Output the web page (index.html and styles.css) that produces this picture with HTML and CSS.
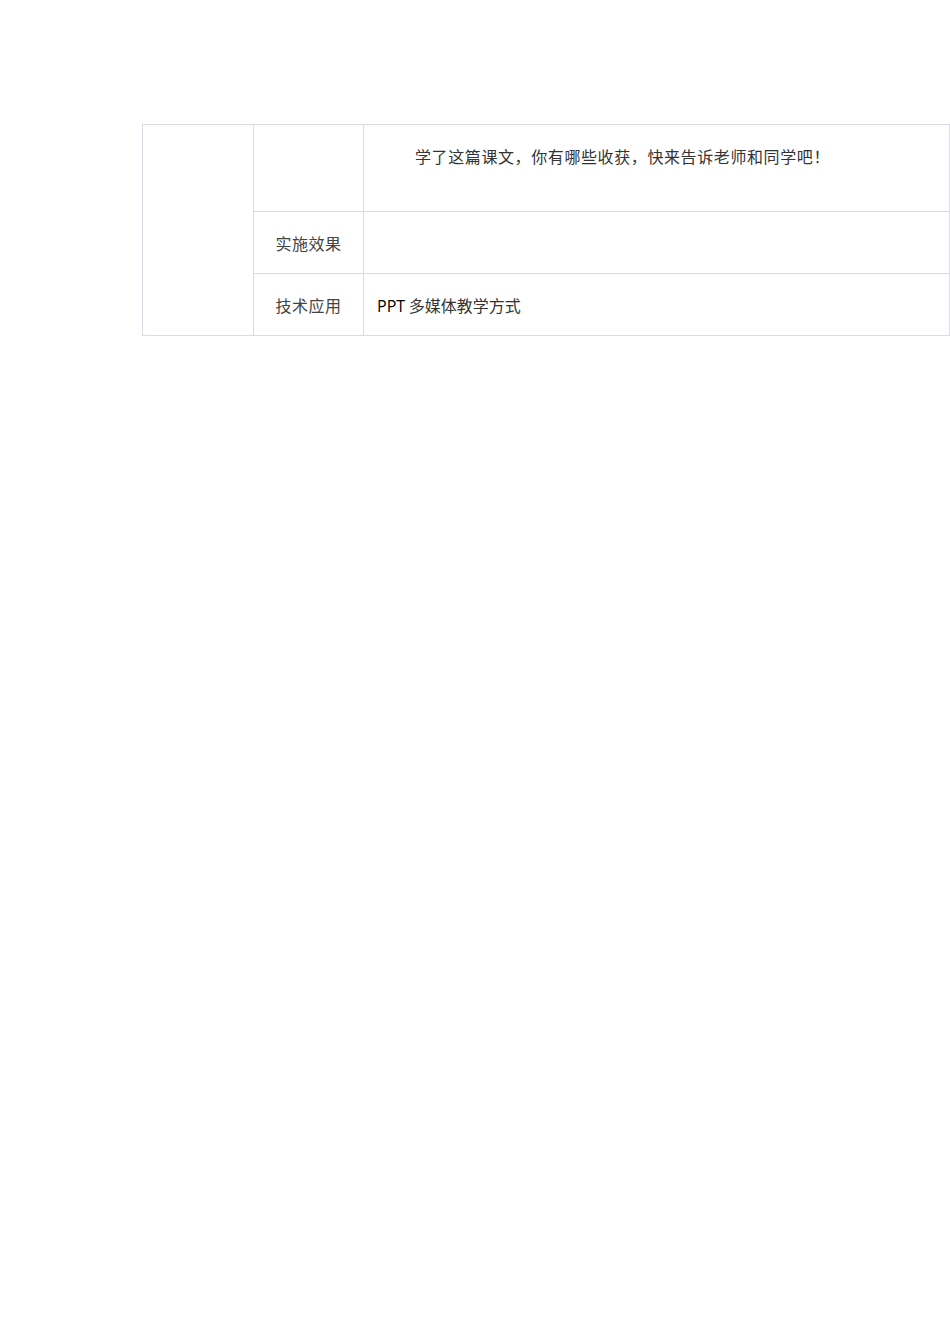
FILE: index.html
```html
<!DOCTYPE html>
<html lang="zh-CN">
<head>
  <meta charset="UTF-8">
  <title>教学设计</title>
  <link rel="stylesheet" href="styles.css">
</head>
<body>
  <table class="plan">
    <colgroup>
      <col class="col-a">
      <col class="col-b">
      <col class="col-c">
    </colgroup>
    <tr class="row-talk">
      <td rowspan="3"></td>
      <td></td>
      <td class="text-cell"><p class="indent">学了这篇课文，你有哪些收获，快来告诉老师和同学吧！</p></td>
    </tr>
    <tr class="row-short">
      <td class="label">实施效果</td>
      <td></td>
    </tr>
    <tr class="row-short">
      <td class="label">技术应用</td>
      <td class="text-cell tech"><span class="latin">PPT</span> 多媒体教学方式</td>
    </tr>
  </table>
</body>
</html>
```

FILE: styles.css
```css
body {
  margin: 0;
  padding: 124px 0 0 142px;
  background: #fff;
  font-family: "Noto Sans CJK SC", "Liberation Serif", serif;
  color: #333;
}

.plan {
  border-collapse: collapse;
  table-layout: fixed;
  width: 807px;
}

.col-a { width: 111px; }
.col-b { width: 110px; }
.col-c { width: 586px; }

.plan td {
  border: 1px solid #d9dbe8;
  padding: 0 13px;
  font-size: 16px;
  vertical-align: middle;
}

.row-talk td { height: 86px; }
.row-short td { height: 61px; }

.row-talk .text-cell {
  vertical-align: top;
}

.indent {
  margin: 20px 0 0;
  text-indent: 38px;
  line-height: 22px;
  letter-spacing: 0.6px;
}

.label {
  text-align: center;
  color: #444;
  letter-spacing: 0.5px;
}

.tech {
  color: #333;
  font-size: 16.5px;
}

.latin {
  font-family: "Open Sans", "Liberation Sans", sans-serif;
  color: #000;
}
```
